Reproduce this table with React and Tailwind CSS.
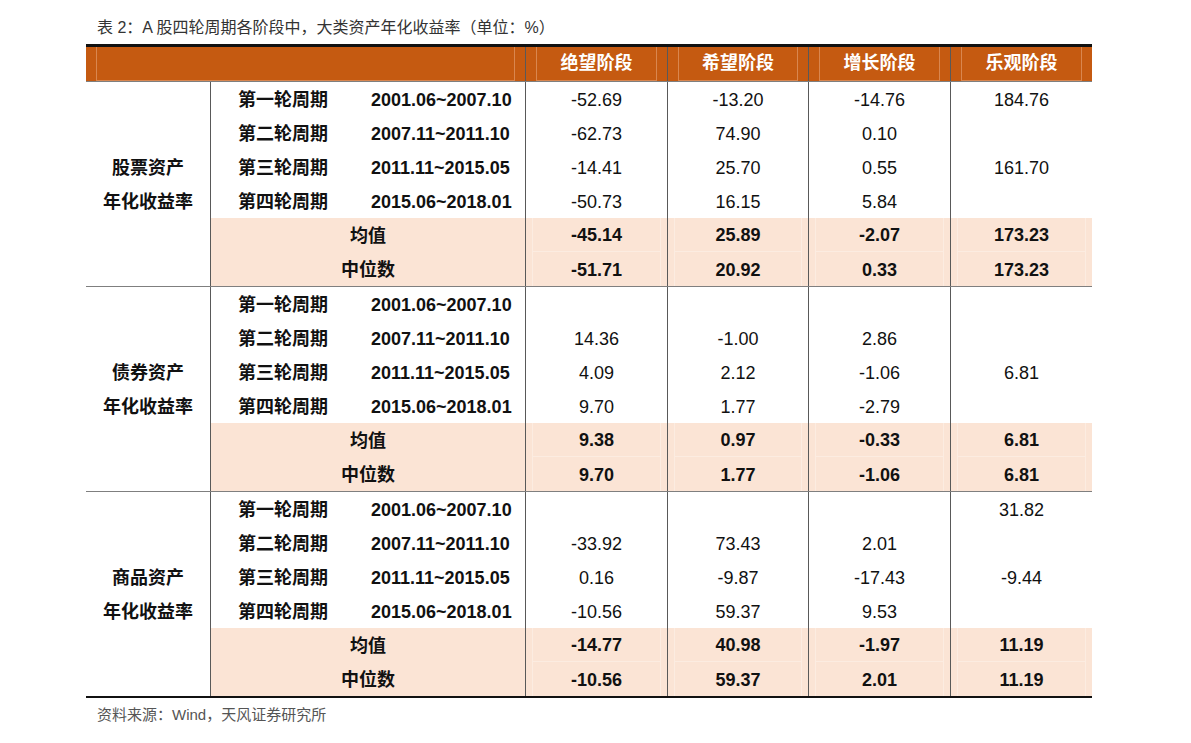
const groups = [
  {
    name: ['股票资产', '年化收益率'],
    rows: [
      ['-52.69', '-13.20', '-14.76', '184.76'],
      ['-62.73', '74.90', '0.10', ''],
      ['-14.41', '25.70', '0.55', '161.70'],
      ['-50.73', '16.15', '5.84', ''],
    ],
    mean: ['-45.14', '25.89', '-2.07', '173.23'],
    median: ['-51.71', '20.92', '0.33', '173.23'],
  },
  {
    name: ['债券资产', '年化收益率'],
    rows: [
      ['', '', '', ''],
      ['14.36', '-1.00', '2.86', ''],
      ['4.09', '2.12', '-1.06', '6.81'],
      ['9.70', '1.77', '-2.79', ''],
    ],
    mean: ['9.38', '0.97', '-0.33', '6.81'],
    median: ['9.70', '1.77', '-1.06', '6.81'],
  },
  {
    name: ['商品资产', '年化收益率'],
    rows: [
      ['', '', '', '31.82'],
      ['-33.92', '73.43', '2.01', ''],
      ['0.16', '-9.87', '-17.43', '-9.44'],
      ['-10.56', '59.37', '9.53', ''],
    ],
    mean: ['-14.77', '40.98', '-1.97', '11.19'],
    median: ['-10.56', '59.37', '2.01', '11.19'],
  },
];

const cycles = [
  ['第一轮周期', '2001.06~2007.10'],
  ['第二轮周期', '2007.11~2011.10'],
  ['第三轮周期', '2011.11~2015.05'],
  ['第四轮周期', '2015.06~2018.01'],
];

const colW = ['w-[142px]', 'w-[141px]', 'w-[142px]', 'w-[142px]'];
const stages = ['绝望阶段', '希望阶段', '增长阶段', '乐观阶段'];

const ValueCells = ({ values }) =>
  values.map((v, i) => (
    <div
      key={i}
      className={`${colW[i]} h-full pt-[2px] border-l border-[#595959] flex items-center justify-center`}
    >
      {v}
    </div>
  ));

const SummaryRow = ({ label, values, last }) => (
  <div className="flex h-[34px] bg-[#fbe4d5]">
    <div className="w-[315px] h-full pt-[2px] border-l border-[#595959] flex items-center justify-center font-bold">
      {label}
    </div>
    {values.map((v, i) => (
      <div key={i} className={`${colW[i]} h-full border-l border-[#595959] px-[6px]`}>
        <div
          className={`h-full pt-[2px] flex items-center justify-center font-bold border-x border-white/30 ${last ? '' : 'border-b'}`}
        >
          {v}
        </div>
      </div>
    ))}
  </div>
);

export default function App() {
  return (
    <div
      className="w-[1191px] h-[743px] bg-white text-[#111]"
      style={{ fontFamily: '"Liberation Sans", "Noto Sans CJK SC", sans-serif' }}
    >
      <div className="pt-[18px] pl-[97px] h-[38px] text-[16px] leading-[20px] text-[#333]">
        表 2：A 股四轮周期各阶段中，大类资产年化收益率（单位：%）
      </div>
      <div className="ml-[86px] mt-[6px] w-[1006px] border-t-[3px] border-b-[2px] border-t-[#111] border-b-[#111] text-[18px]">
        {/* header */}
        <div className="flex h-[35px] bg-[#c55a11] border-b border-[#7f7f7f] text-white font-bold">
          <div className="w-[439px] h-full px-[10px]">
            <div className="h-full border-x border-b border-[#d9864f]"></div>
          </div>
          {stages.map((s, i) => (
            <div key={s} className={`${colW[i]} h-full border-l border-[#595959] px-[10px]`}>
              <div className="h-full flex items-center justify-center border-x border-b border-[#d9864f]">
                {s}
              </div>
            </div>
          ))}
        </div>

        {groups.map((g, gi) => (
          <div key={gi} className={`flex ${gi > 0 ? 'border-t border-[#7f7f7f]' : ''}`}>
            <div className="w-[124px] pt-[2px] flex flex-col items-center justify-center font-bold leading-[34px]">
              <div>{g.name[0]}</div>
              <div>{g.name[1]}</div>
            </div>
            <div className="flex flex-col">
              {g.rows.map((r, ri) => (
                <div key={ri} className="flex h-[34px]">
                  <div className="w-[315px] h-full pt-[2px] border-l border-[#595959] flex items-center font-bold">
                    <span className="w-[160px] pl-[27px]">{cycles[ri][0]}</span>
                    <span>{cycles[ri][1]}</span>
                  </div>
                  <ValueCells values={r} />
                </div>
              ))}
              <SummaryRow label="均值" values={g.mean} />
              <SummaryRow label="中位数" values={g.median} last />
            </div>
          </div>
        ))}
      </div>
      <div className="mt-[7px] pl-[97px] text-[15px] leading-[20px] text-[#555]">
        资料来源：Wind，天风证券研究所
      </div>
    </div>
  );
}
